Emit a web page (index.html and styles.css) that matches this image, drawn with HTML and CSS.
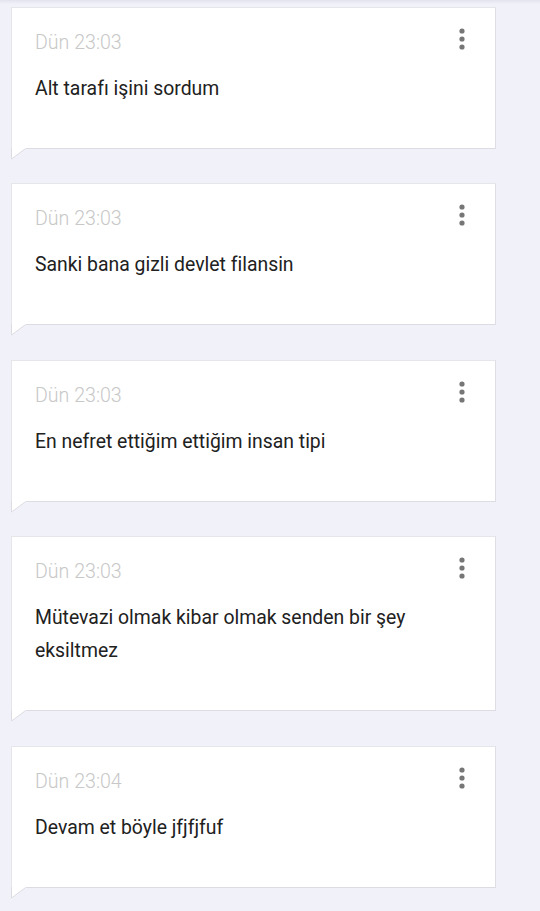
FILE: index.html
```html
<!DOCTYPE html>
<html lang="tr">
<head>
<meta charset="utf-8">
<title>Notlar</title>
<link rel="stylesheet" href="styles.css">
</head>
<body>
<main class="list">
  <article class="card">
    <header class="card-head">
      <span class="time">Dün 23:03</span>
      <svg class="kebab" width="10" height="26" viewBox="0 0 10 26"><circle cx="5" cy="6" r="2.6"/><circle cx="5" cy="14" r="2.6"/><circle cx="5" cy="22" r="2.6"/></svg>
    </header>
    <p class="msg">Alt tarafı işini sordum</p>
    <svg class="tail" width="15" height="12" viewBox="0 0 15 12"><path class="tail-fill" d="M0 0 H15 L1 11 V0Z"/><path class="tail-line" d="M0.5 0 V11 L14 1"/></svg>
  </article>
  <article class="card">
    <header class="card-head">
      <span class="time">Dün 23:03</span>
      <svg class="kebab" width="10" height="26" viewBox="0 0 10 26"><circle cx="5" cy="6" r="2.6"/><circle cx="5" cy="14" r="2.6"/><circle cx="5" cy="22" r="2.6"/></svg>
    </header>
    <p class="msg">Sanki bana gizli devlet filansin</p>
    <svg class="tail" width="15" height="12" viewBox="0 0 15 12"><path class="tail-fill" d="M0 0 H15 L1 11 V0Z"/><path class="tail-line" d="M0.5 0 V11 L14 1"/></svg>
  </article>
  <article class="card">
    <header class="card-head">
      <span class="time">Dün 23:03</span>
      <svg class="kebab" width="10" height="26" viewBox="0 0 10 26"><circle cx="5" cy="6" r="2.6"/><circle cx="5" cy="14" r="2.6"/><circle cx="5" cy="22" r="2.6"/></svg>
    </header>
    <p class="msg">En nefret ettiğim ettiğim insan tipi</p>
    <svg class="tail" width="15" height="12" viewBox="0 0 15 12"><path class="tail-fill" d="M0 0 H15 L1 11 V0Z"/><path class="tail-line" d="M0.5 0 V11 L14 1"/></svg>
  </article>
  <article class="card">
    <header class="card-head">
      <span class="time">Dün 23:03</span>
      <svg class="kebab" width="10" height="26" viewBox="0 0 10 26"><circle cx="5" cy="6" r="2.6"/><circle cx="5" cy="14" r="2.6"/><circle cx="5" cy="22" r="2.6"/></svg>
    </header>
    <p class="msg">Mütevazi olmak kibar olmak senden bir şey eksiltmez</p>
    <svg class="tail" width="15" height="12" viewBox="0 0 15 12"><path class="tail-fill" d="M0 0 H15 L1 11 V0Z"/><path class="tail-line" d="M0.5 0 V11 L14 1"/></svg>
  </article>
  <article class="card">
    <header class="card-head">
      <span class="time">Dün 23:04</span>
      <svg class="kebab" width="10" height="26" viewBox="0 0 10 26"><circle cx="5" cy="6" r="2.6"/><circle cx="5" cy="14" r="2.6"/><circle cx="5" cy="22" r="2.6"/></svg>
    </header>
    <p class="msg">Devam et böyle jfjfjfuf</p>
    <svg class="tail" width="15" height="12" viewBox="0 0 15 12"><path class="tail-fill" d="M0 0 H15 L1 11 V0Z"/><path class="tail-line" d="M0.5 0 V11 L14 1"/></svg>
  </article>
</main>
</body>
</html>
```

FILE: styles.css
```css
html, body {
  margin: 0;
  padding: 0;
}
body {
  background: linear-gradient(#e3e3ee 0, #f1f1f9 4px) #f1f1f9;
  font-family: Roboto, "Noto Sans", "Liberation Sans", sans-serif;
  min-height: 911px;
}
.list {
  display: flex;
  flex-direction: column;
  gap: 34.4px;
  padding: 7px 0 0 11px;
  width: 485px;
}
.card {
  position: relative;
  box-sizing: border-box;
  background: #fff;
  border: 1px solid #e6e6ea;
  border-bottom-color: #dcdce2;
  border-right-color: #dedee4;
  padding: 22px 28px 43px 23px;
}
.card-head {
  display: flex;
  justify-content: space-between;
  align-items: flex-start;
  height: 26px;
}
.time {
  font-size: 19.6px;
  font-weight: 300;
  line-height: 26px;
  color: #c8c8c8;
}
.kebab {
  margin-top: -5px;
  fill: #767676;
}
.msg {
  margin: 16px 0 0;
  font-size: 19.4px;
  line-height: 33px;
  color: #212121;
}
.tail {
  position: absolute;
  left: -1px;
  top: 100%;
  display: block;
  overflow: visible;
}
.tail-fill {
  fill: #fff;
}
.tail-line {
  fill: none;
  stroke: #dcdce2;
  stroke-width: 1;
}
```
